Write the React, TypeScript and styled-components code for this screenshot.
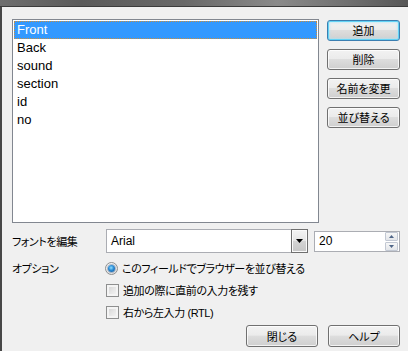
import React, { useState } from 'react';
import styled, { createGlobalStyle, css } from 'styled-components';

const jp = `"Noto Sans CJK JP", "Liberation Sans", sans-serif`;
const mixed = `"Liberation Sans", "Noto Sans CJK JP", sans-serif`;

const GlobalStyle = createGlobalStyle`
  html, body {
    margin: 0;
    padding: 0;
    background: #f0f0f0;
  }
  body {
    font-family: ${jp};
  }
`;

const Window = styled.div`
  width: 408px;
  height: 351px;
  display: flex;
  flex-direction: column;
  background: #f0f0f0;
  overflow: hidden;
`;

const TitleEdge = styled.div`
  height: 6px;
  flex-shrink: 0;
  background: linear-gradient(90deg, #6e6e6e 0%, #5a5a5a 20%, #686868 45%, #8a8a8a 68%, #707070 85%, #565656 100%);
  border-bottom: 1px solid #3b3b3b;
`;

const Body = styled.div`
  flex: 1;
  display: flex;
  flex-direction: column;
  border-left: 2px solid #474747;
  padding: 12px 8px 0 10px;
`;

const TopRow = styled.div`
  display: flex;
  align-items: flex-start;
`;

const ListBox = styled.ul`
  box-sizing: border-box;
  width: 308px;
  height: 204px;
  margin: 0;
  padding: 1px;
  list-style: none;
  background: #fff;
  border: 1px solid #828790;
`;

const ListItem = styled.li<{ $selected: boolean }>`
  height: 18px;
  line-height: 18px;
  padding-left: 3px;
  font-family: "Liberation Sans", Arial, sans-serif;
  font-size: 13px;
  color: #000;
  cursor: default;
  ${p =>
    p.$selected &&
    css`
      background: #3399ff;
      color: #fff;
      outline: 1px dotted #c98e3e;
      outline-offset: -1px;
    `}
`;

const ButtonColumn = styled.div`
  display: flex;
  flex-direction: column;
  gap: 8px;
  margin-left: 8px;
  margin-top: 1px;
`;

const Button = styled.button<{ $default?: boolean; $width?: number }>`
  box-sizing: border-box;
  width: ${p => p.$width ?? 73}px;
  height: 21px;
  padding: 0;
  font-family: ${jp};
  font-size: 11px;
  font-feature-settings: "palt";
  line-height: 1;
  color: #000;
  border: 1px solid #707070;
  border-radius: 3px;
  background: linear-gradient(to bottom, #f2f2f2 0%, #ebebeb 46%, #dddddd 50%, #cfcfcf 100%);
  box-shadow: inset 0 0 0 1px rgba(255, 255, 255, 0.75);
  ${p =>
    p.$default &&
    css`
      border-color: #3c7fb1;
      box-shadow: inset 0 0 0 1px #62d2f5, inset 0 0 2px 2px rgba(170, 230, 250, 0.55);
    `}
`;

const FontRow = styled.div`
  display: flex;
  align-items: center;
  margin-top: 6px;
`;

const Label = styled.div`
  width: 94px;
  flex-shrink: 0;
  font-family: ${jp};
  font-size: 11px;
  letter-spacing: -0.4px;
  font-feature-settings: "palt";
  color: #000;
`;

const Combo = styled.div`
  box-sizing: border-box;
  width: 202px;
  height: 24px;
  display: flex;
  align-items: stretch;
  background: #fff;
  border: 1px solid #abadb3;
  border-right: none;
`;

const FieldText = styled.div`
  flex: 1;
  display: flex;
  align-items: center;
  padding-left: 4px;
  font-family: "Liberation Sans", Arial, sans-serif;
  font-size: 12px;
  color: #000;
`;

const DropButton = styled.div`
  box-sizing: border-box;
  width: 17px;
  margin-top: -1px;
  margin-bottom: -1px;
  display: flex;
  align-items: center;
  justify-content: center;
  border: 1px solid #6f6f6f;
  background: linear-gradient(to bottom, #f4f4f4 0%, #e6e6e6 50%, #d4d4d4 51%, #c6c6c6 100%);
  box-shadow: inset 0 0 0 1px #fafafa;
`;

const SpinBox = styled.div`
  box-sizing: border-box;
  width: 86px;
  height: 21px;
  margin-left: 6px;
  display: flex;
  background: #fff;
  border: 1px solid #abadb3;
`;

const SpinButtons = styled.div`
  display: flex;
  flex-direction: column;
  justify-content: center;
  gap: 1px;
  padding: 0 1px;
`;

const SpinButton = styled.div`
  box-sizing: border-box;
  width: 13px;
  height: 9px;
  display: flex;
  align-items: center;
  justify-content: center;
  border: 1px solid #c2c8d3;
  border-radius: 1px;
  background: linear-gradient(to bottom, #f7f7f7, #e3e6ea);
`;

const OptionsRow = styled.div`
  display: flex;
  align-items: flex-start;
  margin-top: 4px;
`;

const OptionLabel = styled(Label)`
  height: 22px;
  line-height: 22px;
`;

const OptionList = styled.div`
  display: flex;
  flex-direction: column;
`;

const OptionItem = styled.label`
  height: 22px;
  display: flex;
  align-items: center;
  gap: 4px;
  font-family: ${mixed};
  font-size: 11px;
  letter-spacing: -0.4px;
  font-feature-settings: "palt";
  color: #000;
  cursor: default;
`;

const Radio = styled.span<{ $checked: boolean }>`
  position: relative;
  box-sizing: border-box;
  width: 13px;
  height: 13px;
  margin-left: -1px;
  border-radius: 50%;
  border: 1px solid #8e8f8f;
  background: radial-gradient(circle at 40% 35%, #ffffff 0%, #e8e8e8 60%, #d2d2d2 100%);

  ${p =>
    p.$checked &&
    css`
      &::after {
        content: '';
        position: absolute;
        left: 2px;
        top: 2px;
        width: 7px;
        height: 7px;
        border-radius: 50%;
        background: radial-gradient(circle at 45% 40%, #8fe0ff 0%, #2a8ad4 45%, #104f8f 100%);
        box-shadow: 0 0 0 1px rgba(40, 80, 130, 0.35);
      }
    `}
`;

const Checkbox = styled.span`
  box-sizing: border-box;
  width: 13px;
  height: 13px;
  border: 1px solid #8e8f8f;
  background: linear-gradient(135deg, #cfcfcf 0%, #e6e6e6 50%, #f8f8f8 100%);
  box-shadow: inset 0 0 0 2px #f4f4f4;
`;

const Footer = styled.div`
  display: flex;
  justify-content: flex-end;
  gap: 10px;
  margin-top: 2px;
`;

const FooterButton = styled(Button)`
  height: 22px;
`;

const DownTriangle = ({ color = '#000', w = 7, h = 4 }: { color?: string; w?: number; h?: number }) => (
  <svg width={w} height={h} viewBox={`0 0 ${w} ${h}`}>
    <polygon points={`0,0 ${w},0 ${w / 2},${h}`} fill={color} />
  </svg>
);

const UpTriangle = ({ color = '#000', w = 7, h = 4 }: { color?: string; w?: number; h?: number }) => (
  <svg width={w} height={h} viewBox={`0 0 ${w} ${h}`}>
    <polygon points={`0,${h} ${w},${h} ${w / 2},0`} fill={color} />
  </svg>
);

const fields = ['Front', 'Back', 'sound', 'section', 'id', 'no'];

const App: React.FC = () => {
  const [selected, setSelected] = useState(0);

  return (
    <Window>
      <GlobalStyle />
      <TitleEdge />
      <Body>
        <TopRow>
          <ListBox>
            {fields.map((f, i) => (
              <ListItem key={f} $selected={i === selected} onClick={() => setSelected(i)}>
                {f}
              </ListItem>
            ))}
          </ListBox>
          <ButtonColumn>
            <Button $default>追加</Button>
            <Button>削除</Button>
            <Button>名前を変更</Button>
            <Button>並び替える</Button>
          </ButtonColumn>
        </TopRow>

        <FontRow>
          <Label>フォントを編集</Label>
          <Combo>
            <FieldText>Arial</FieldText>
            <DropButton>
              <DownTriangle />
            </DropButton>
          </Combo>
          <SpinBox>
            <FieldText>20</FieldText>
            <SpinButtons>
              <SpinButton>
                <UpTriangle color="#4f6688" w={5} h={3} />
              </SpinButton>
              <SpinButton>
                <DownTriangle color="#4f6688" w={5} h={3} />
              </SpinButton>
            </SpinButtons>
          </SpinBox>
        </FontRow>

        <OptionsRow>
          <OptionLabel>オプション</OptionLabel>
          <OptionList>
            <OptionItem>
              <Radio $checked />
              このフィールドでブラウザーを並び替える
            </OptionItem>
            <OptionItem>
              <Checkbox />
              追加の際に直前の入力を残す
            </OptionItem>
            <OptionItem>
              <Checkbox />
              右から左入力 (RTL)
            </OptionItem>
          </OptionList>
        </OptionsRow>

        <Footer>
          <FooterButton $width={72}>閉じる</FooterButton>
          <FooterButton $width={72}>ヘルプ</FooterButton>
        </Footer>
      </Body>
    </Window>
  );
};

export default App;
